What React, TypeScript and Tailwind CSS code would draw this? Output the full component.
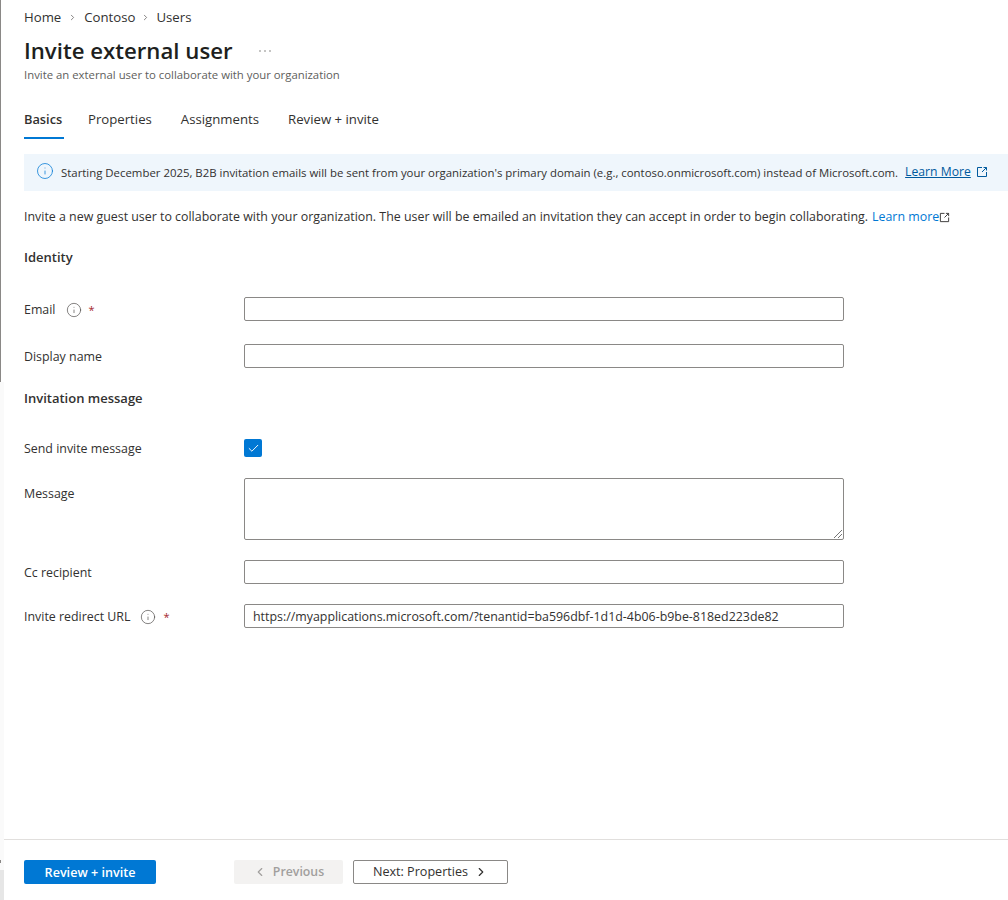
import { Check, ChevronLeft, ChevronRight, Info } from 'lucide-react';

function ExternalIcon({ size }: { size: number }) {
  return (
    <svg width={size} height={size} viewBox="0 0 12 12" fill="none" stroke="currentColor" strokeWidth="1" className="shrink-0">
      <path d="M6 1.5H1.5v9h9V6" />
      <path d="M7.5 1.5h3v3M10.5 1.5L6 6" />
    </svg>
  );
}

function Label({ text, info, required }: { text: string; info?: boolean; required?: boolean }) {
  return (
    <div className="w-[220px] shrink-0 flex items-center text-[12.4px] text-[#323130] translate-y-[1px]">
      <span>{text}</span>
      {info && <Info size={16} strokeWidth={1} className="ml-[10px] text-[#484644]" />}
      {required && <span className="ml-[7px] text-[11px] text-[#a4262c]">*</span>}
    </div>
  );
}

function TextBox({ value }: { value?: string }) {
  return (
    <div className="w-[600px] h-[24px] border border-[#8a8886] rounded-[2px] px-[8px] flex items-center text-[12.4px] text-[#323130]">
      <span className="translate-y-[1px]">{value}</span>
    </div>
  );
}

export default function App() {
  return (
    <div className="relative w-[1008px] h-[900px] bg-white overflow-hidden font-['Open_Sans',sans-serif] text-[#323130]">
      <div className="absolute left-0 top-0 w-[1px] h-[382px] bg-[#8a8886]" />
      <div className="absolute left-0 top-[382px] w-[4px] h-[488px] bg-[#fafafa]" />
      <div className="absolute left-0 top-[860px] w-[1px] h-[3px] bg-[#8a8886]" />
      <div className="absolute left-0 top-[870px] w-[4px] h-[30px] bg-[#e6e6e6]" />

      <div className="pl-[24px]">
        <nav className="h-[34px] pt-[1px] flex items-center text-[13.2px] text-[#323130]">
          <span>Home</span>
          <ChevronRight size={9} className="mx-[7px] text-[#605e5c]" />
          <span>Contoso</span>
          <ChevronRight size={9} className="mx-[6px] text-[#605e5c]" />
          <span>Users</span>
        </nav>
        <div className="flex items-center h-[34px]">
          <h1 className="text-[22.2px] font-semibold text-[#201f1e] leading-[34px] -mt-[1px]">Invite external user</h1>
          <svg width="14" height="4" viewBox="0 0 14 4" fill="#605e5c" className="ml-[25px] -mt-[1px]">
            <circle cx="2" cy="2" r="0.7" />
            <circle cx="7" cy="2" r="0.7" />
            <circle cx="12" cy="2" r="0.7" />
          </svg>
        </div>
        <p className="text-[11.35px] text-[#605e5c] leading-[14px]">Invite an external user to collaborate with your organization</p>

        <div className="mt-[22px] flex text-[13.2px] h-[34px]">
          <div className="relative w-[40px] pt-[6px] font-semibold text-[12.8px]">
            Basics
            <div className="absolute left-0 right-0 bottom-[-1px] h-[2px] bg-[#0078d4]" />
          </div>
          <div className="ml-[24px] pt-[6px]">Properties</div>
          <div className="ml-[29px] pt-[6px]">Assignments</div>
          <div className="ml-[29px] pt-[6px]">Review + invite</div>
        </div>
      </div>

      <div className="ml-[24px] mt-[16px] h-[37px] bg-[#eff6fc] flex items-center text-[11.4px] text-[#323130] whitespace-nowrap">
        <Info size={18} strokeWidth={1} className="ml-[12px] mr-[7px] -mt-[4px] text-[#0078d4]" />
        <span>Starting December 2025, B2B invitation emails will be sent from your organization's primary domain (e.g., contoso.onmicrosoft.com) instead of Microsoft.com.</span>
        <span className="ml-[7px] flex items-center gap-[5px] text-[12.2px] text-[#005a9e] underline">
          Learn More
          <ExternalIcon size={12} />
        </span>
      </div>

      <div className="ml-[24px] mt-[16px] h-[20px] flex items-center text-[12.4px] whitespace-nowrap">
        <span>Invite a new guest user to collaborate with your organization. The user will be emailed an invitation they can accept in order to begin collaborating.</span>
        <span className="ml-[4px] text-[#0078d4]">Learn more</span>
        <ExternalIcon size={11} />
      </div>

      <div className="ml-[24px]">
        <h2 className="mt-[21px] h-[20px] flex items-center text-[13px] font-semibold">Identity</h2>
        <div className="mt-[29px] flex items-center">
          <Label text="Email" info required />
          <TextBox />
        </div>
        <div className="mt-[23px] flex items-center">
          <Label text="Display name" />
          <TextBox />
        </div>
        <h2 className="mt-[21px] h-[20px] flex items-center text-[13px] font-semibold">Invitation message</h2>
        <div className="mt-[30px] h-[18px] flex items-center">
          <Label text="Send invite message" />
          <div className="w-[18px] h-[18px] rounded-[2px] bg-[#0078d4] flex items-center justify-center">
            <Check size={13} strokeWidth={1.75} className="text-white" />
          </div>
        </div>
        <div className="mt-[21px] flex items-start">
          <div className="pt-[6px]">
            <Label text="Message" />
          </div>
          <div className="relative w-[600px] h-[62px] border border-[#8a8886] rounded-[2px]">
            <svg className="absolute right-0 bottom-0" width="10" height="10" viewBox="0 0 10 10" fill="none" stroke="#767676" strokeWidth="1">
              <path d="M1 9L9 1M5 9L9 5" />
            </svg>
          </div>
        </div>
        <div className="mt-[20px] flex items-center">
          <Label text="Cc recipient" />
          <TextBox />
        </div>
        <div className="mt-[20px] flex items-center">
          <Label text="Invite redirect URL" info required />
          <TextBox value="https://myapplications.microsoft.com/?tenantid=ba596dbf-1d1d-4b06-b9be-818ed223de82" />
        </div>
      </div>

      <div className="absolute left-[4px] right-0 top-[839px] border-t border-[#e1dfdd]" />
      <div className="absolute left-[24px] top-[860px] flex items-start text-[12.6px]">
        <button className="w-[132px] h-[24px] pt-[3px] bg-[#0078d4] rounded-[2px] text-white font-semibold">Review + invite</button>
        <button className="ml-[78px] w-[109px] h-[24px] bg-[#f3f2f1] rounded-[2px] text-[#a19f9d] font-semibold text-[12.3px] flex items-center justify-center">
          <ChevronLeft size={14} className="mr-[6px]" />Previous
        </button>
        <button className="ml-[10px] w-[155px] h-[24px] border border-[#8a8886] rounded-[2px] text-[#323130] flex items-center justify-center">
          Next: Properties<ChevronRight size={14} className="ml-[6px]" />
        </button>
      </div>
    </div>
  );
}
